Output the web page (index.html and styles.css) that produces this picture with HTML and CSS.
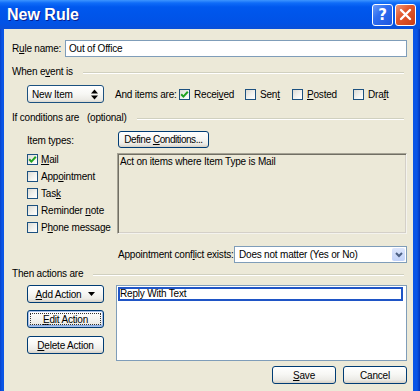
FILE: index.html
```html
<!DOCTYPE html>
<html>
<head>
<meta charset="utf-8">
<link rel="stylesheet" href="styles.css">
</head>
<body>
<div class="window">
  <div class="titlebar">
    <span class="title">New Rule</span>
    <div class="tb-buttons">
      <span class="tb-btn help">?</span>
      <span class="tb-btn close"><svg width="13" height="13" viewBox="0 0 13 13"><path d="M2 2 L11 11 M11 2 L2 11" stroke="#fff" stroke-width="2.4" stroke-linecap="round"/></svg></span>
    </div>
  </div>
  <div class="client">
    <div class="name-row">
      <span class="name-label">R<u>u</u>le name:</span>
      <div class="textbox">Out of Office</div>
    </div>

    <div class="group-head"><span>When e<u>v</u>ent is</span><span class="etch"></span></div>

    <div class="event-row">
      <div class="spin-select"><span>New Item</span>
        <svg width="7" height="11" viewBox="0 0 7 11"><polygon points="0,4.5 3.5,0.5 7,4.5" fill="#000"/><polygon points="0,6.5 3.5,10.5 7,6.5" fill="#000"/></svg>
      </div>
      <span class="and-label">And items are:</span>
      <div class="chk w-recv"><span class="box checked"><svg width="9" height="9" viewBox="0 0 9 9"><polyline points="1.2,4.2 3.4,6.6 7.8,1.8" fill="none" stroke="#21a121" stroke-width="2"/></svg></span><span>Recei<u>v</u>ed</span></div>
      <div class="chk w-sent"><span class="box"></span><span>Sen<u>t</u></span></div>
      <div class="chk w-posted"><span class="box"></span><span><u>P</u>osted</span></div>
      <div class="chk"><span class="box"></span><span>Dra<u>f</u>t</span></div>
    </div>

    <div class="group-head"><span>If conditions are&nbsp;&nbsp;&nbsp;(optional)</span><span class="etch"></span></div>

    <div class="cond">
      <div class="types">
        <div class="types-label">Item types:</div>
        <div class="chk row"><span class="box checked"><svg width="9" height="9" viewBox="0 0 9 9"><polyline points="1.2,4.2 3.4,6.6 7.8,1.8" fill="none" stroke="#21a121" stroke-width="2"/></svg></span><span><u>M</u>ail</span></div>
        <div class="chk row"><span class="box"></span><span>App<u>o</u>intment</span></div>
        <div class="chk row"><span class="box"></span><span>Tas<u>k</u></span></div>
        <div class="chk row"><span class="box"></span><span>Reminder <u>n</u>ote</span></div>
        <div class="chk row"><span class="box"></span><span>P<u>h</u>one message</span></div>
      </div>
      <div class="cond-right">
        <button class="btn define"><span>Define <u>C</u>onditions...</span></button>
        <div class="cond-box">Act on items where Item Type is Mail</div>
      </div>
    </div>

    <div class="conflict-row">
      <span class="conflict-label">Appointment conf<u>l</u>ict exists:</span>
      <div class="combo"><span>Does not matter (Yes or No)</span>
        <span class="combo-btn"><svg width="8" height="6" viewBox="0 0 8 6"><polyline points="1,1 4,4 7,1" fill="none" stroke="#4d6185" stroke-width="2"/></svg></span>
      </div>
    </div>

    <div class="group-head"><span>Then actions are</span><span class="etch"></span></div>

    <div class="actions">
      <div class="action-btns">
        <button class="btn"><span><u>A</u>dd Action</span><svg class="dd" width="7" height="4" viewBox="0 0 7 4"><polygon points="0,0 7,0 3.5,4" fill="#000"/></svg></button>
        <button class="btn focus"><span><u>E</u>dit Action</span></button>
        <button class="btn"><span><u>D</u>elete Action</span></button>
      </div>
      <div class="action-list">
        <div class="action-item">Reply With Text</div>
      </div>
    </div>

    <div class="footer">
      <button class="btn foot"><span><u>S</u>ave</span></button>
      <button class="btn foot"><span>Cancel</span></button>
    </div>
  </div>
</div>
</body>
</html>
```
FILE: styles.css
```css
* { box-sizing: border-box; }
html, body { margin: 0; padding: 0; }
body {
  width: 420px;
  height: 391px;
  overflow: hidden;
  font-family: "Liberation Sans", Arial, sans-serif;
  font-size: 10px;
  letter-spacing: -0.2px;
  color: #000;
}
.window {
  width: 420px;
  height: 391px;
  display: flex;
  flex-direction: column;
  background: linear-gradient(to right, #0842c9 0, #0a55e6 2px, #0a55e6 calc(100% - 3px), #0033b8 100%);
}
.titlebar {
  height: 29px;
  flex: none;
  display: flex;
  align-items: center;
  justify-content: space-between;
  padding: 0 4px 0 7px;
  background: linear-gradient(to bottom, #3d95ff 0, #0f6cf8 3px, #0058ee 7px, #0055ea 50%, #0152e6 80%, #0a4fd8 100%);
}
.title {
  font-family: "Liberation Sans", Arial, sans-serif;
  font-weight: bold;
  font-size: 16px;
  letter-spacing: 0;
  color: #fff;
  text-shadow: 1px 1px 0 #0a1e8c;
  padding-top: 1px;
}
.tb-buttons { display: flex; gap: 2px; }
.tb-btn {
  width: 21px;
  height: 22px;
  border: 1px solid #fff;
  border-radius: 3px;
  display: flex;
  align-items: center;
  justify-content: center;
  color: #fff;
}
.help {
  background: linear-gradient(135deg, #6b9cf8 0, #2f6ef0 40%, #1d56e0 100%);
  font-family: "DejaVu Sans", sans-serif;
  font-weight: bold;
  font-size: 15px;
  letter-spacing: 0;
}
.close {
  background: linear-gradient(135deg, #f0987a 0, #e2582e 40%, #cc3d14 100%);
}
.client {
  flex: 1;
  margin: 0 7px 4px 4px;
  background: #ece9d8;
  padding: 11px 6px 7px 8px;
  display: flex;
  flex-direction: column;
}
u { text-underline-offset: 1px; }

.name-row { display: flex; align-items: center; height: 17px; }
.name-label { width: 53px; }
.textbox {
  flex: 1;
  height: 17px;
  background: #fff;
  border: 1px solid #7f9db9;
  padding: 0 3px;
  line-height: 15px;
}

.group-head {
  height: 12px;
  display: flex;
  align-items: center;
  margin-top: 9px;
  margin-right: 3px;
  line-height: 12px;
}
.group-head .etch {
  flex: 1;
  height: 2px;
  margin-left: 10px;
  margin-top: 2px;
  border-top: 1px solid #d0d0bf;
  border-bottom: 1px solid #fff;
}

.event-row {
  display: flex;
  align-items: center;
  height: 18px;
  margin-top: 7px;
  padding-left: 15px;
}
.spin-select {
  width: 77px;
  height: 18px;
  border: 1px solid #1c5180;
  border-radius: 3px;
  background: linear-gradient(to bottom, #fff 0, #f7f7f4 50%, #ecebe6 85%, #dcd9cf 100%);
  display: flex;
  align-items: center;
  justify-content: space-between;
  padding: 0 5px 0 4px;
}
.and-label { width: 64px; margin-left: 11px; }

.chk { display: flex; align-items: center; white-space: nowrap; }
.w-recv { width: 66px; }
.w-sent { width: 47px; }
.w-posted { width: 61px; }
.box {
  width: 11px;
  height: 11px;
  flex: none;
  border: 1px solid #1c5180;
  background: linear-gradient(135deg, #dcdbd5 0, #f2f2ee 55%, #fff 100%);
  margin-right: 4px;
  display: flex;
  align-items: center;
  justify-content: center;
}

.group-head + .cond { margin-top: 7px; }
.cond {
  display: grid;
  grid-template-columns: 105px 1fr;
}
.types { padding-left: 15px; padding-top: 4px; }
.types-label { height: 12px; line-height: 12px; margin-bottom: 7px; }
.chk.row { height: 11px; margin-bottom: 6px; }
.chk.row .box { margin-right: 3px; }
.cond-right { display: flex; flex-direction: column; align-items: flex-start; }

.btn {
  font: inherit;
  letter-spacing: inherit;
  color: #000;
  height: 18px;
  border: 1px solid #003c74;
  border-radius: 3px;
  background: linear-gradient(to bottom, #fff 0, #f7f7f4 45%, #ecebe6 80%, #d6d0c5 100%);
  padding: 0 2px;
  display: flex;
  align-items: center;
  justify-content: center;
  position: relative;
  white-space: nowrap;
}
.define { width: 91px; height: 17px; margin-left: 1px; letter-spacing: -0.45px; padding: 0; }
.cond-box {
  width: 100%;
  height: 81px;
  margin-top: 5px;
  border: 1px solid #a5a294;
  border-right-color: #f4f3ee;
  border-bottom-color: #f4f3ee;
  box-shadow: inset 1px 1px 0 #716f64, inset -1px -1px 0 #d4d0c8;
  padding: 2px 2px;
  line-height: 12px;
}

.conflict-row {
  display: flex;
  align-items: center;
  height: 17px;
  margin-top: 7px;
  padding-left: 106px;
}
.conflict-label { width: 116px; white-space: nowrap; }
.combo {
  flex: 1;
  height: 17px;
  border: 1px solid #7f9db9;
  background: #fff;
  display: flex;
  align-items: center;
  justify-content: space-between;
  padding: 0 1px 0 4px;
}
.combo-btn {
  width: 13px;
  height: 13px;
  border-radius: 2px;
  background: linear-gradient(to bottom, #dde6fc, #c1d2f9);
  display: flex;
  align-items: center;
  justify-content: center;
}
.conflict-row + .group-head { margin-top: 5px; }

.actions {
  display: flex;
  margin-top: 5px;
  padding-left: 15px;
}
.action-btns { width: 77px; display: flex; flex-direction: column; }
.action-btns .btn { width: 77px; }
.action-btns .btn + .btn { margin-top: 7px; }
.action-btns .btn:last-child { margin-top: 8px; }
.action-btns .dd { margin-left: 7px; }
.btn.focus { box-shadow: inset 0 0 0 1px #a9c1ec, inset 0 -1px 0 1px #89ade4; }
.btn.focus::after {
  content: "";
  position: absolute;
  inset: 2px;
  border: 1px dotted #333;
}
.action-list {
  flex: 1;
  height: 76px;
  margin-left: 12px;
  border: 1px solid #7f9db9;
  background: #fff;
  padding: 1px 3px 0 1px;
}
.action-item {
  height: 14px;
  border: 2px solid #1f55c6;
  line-height: 10px;
  padding-left: 0;
  background: #fff;
}

.footer {
  display: flex;
  justify-content: flex-end;
  gap: 7px;
  margin-top: 5px;
}
.btn.foot { width: 64px; }
```
